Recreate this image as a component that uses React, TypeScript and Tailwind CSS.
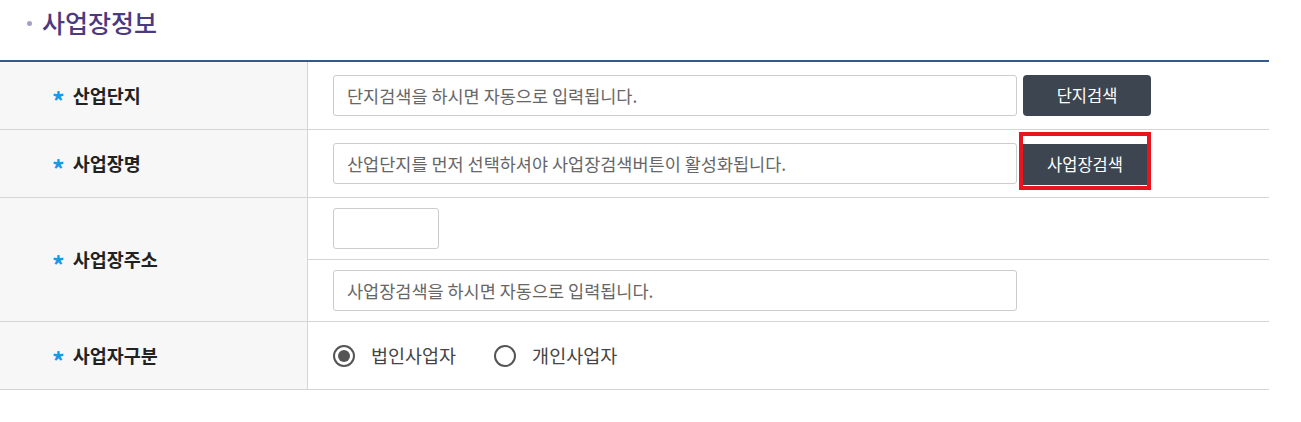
import React from "react";

const font = { fontFamily: '"Noto Sans CJK KR", "Noto Sans", sans-serif' };

function Label({ text }: { text: string }) {
  return (
    <div className="w-[308px] shrink-0 bg-[#f7f7f7] border-r border-[#d5d5d5] flex items-center pl-[52px]">
      <span className="text-[25px] font-bold leading-none text-[#1a9ae6] mt-[9px] mr-[8px]">*</span>
      <span className="text-[18.5px] font-bold text-[#222]">{text}</span>
    </div>
  );
}

function TextBox({ placeholder, w = "w-[684px]" }: { placeholder?: string; w?: string }) {
  return (
    <input
      readOnly
      placeholder={placeholder}
      className={`${w} h-[41px] border border-[#cccccc] rounded-[3px] px-[13px] text-[17.5px] text-[#333] placeholder:text-[#666] bg-white outline-none`}
      style={font}
    />
  );
}

function Radio({ checked, label }: { checked?: boolean; label: string }) {
  return (
    <label className="flex items-center gap-[16px]">
      <span className="w-[22px] h-[22px] rounded-full border-2 border-[#555] flex items-center justify-center bg-white">
        {checked && <span className="w-[12px] h-[12px] rounded-full bg-[#555]" />}
      </span>
      <span className="text-[18.5px] text-[#444]">{label}</span>
    </label>
  );
}

export default function App() {
  return (
    <div className="bg-white w-[1301px] h-[422px]" style={font}>
      <div className="flex items-center h-[60px] pl-[27px] pb-[15px]">
        <span className="w-[5px] h-[5px] rounded-full bg-[#a99cc6] mr-[10px] mt-[2px]" />
        <h2 className="text-[25px] font-medium text-[#4a3a80] leading-none">사업장정보</h2>
      </div>
      <div className="w-[1269px] border-t-2 border-[#2f5b8e]">
        <div className="flex h-[68px] border-b border-[#d5d5d5]">
          <Label text="산업단지" />
          <div className="flex items-center pl-[25px] gap-[6px]">
            <TextBox placeholder="단지검색을 하시면 자동으로 입력됩니다." />
            <button className="w-[128px] h-[41px] rounded-[4px] bg-[#3c4550] text-white text-[16.5px]">단지검색</button>
          </div>
        </div>
        <div className="flex h-[68px] border-b border-[#d5d5d5]">
          <Label text="사업장명" />
          <div className="flex items-center pl-[25px] gap-[2px]">
            <TextBox placeholder="산업단지를 먼저 선택하셔야 사업장검색버튼이 활성화됩니다." />
            <div className="w-[132px] h-[58px] -mt-[5px] border-[4px] border-[#e8141f] bg-white flex flex-col justify-end pb-[1px]">
              <button className="w-full h-[41px] bg-[#3c4550] text-white text-[16.5px]">사업장검색</button>
            </div>
          </div>
        </div>
        <div className="flex h-[124px] border-b border-[#d5d5d5]">
          <Label text="사업장주소" />
          <div className="flex-1 flex flex-col">
            <div className="h-[62px] flex items-center pl-[25px] border-b border-[#d5d5d5]">
              <TextBox w="w-[106px]" />
            </div>
            <div className="flex-1 flex items-center pl-[25px]">
              <TextBox placeholder="사업장검색을 하시면 자동으로 입력됩니다." />
            </div>
          </div>
        </div>
        <div className="flex h-[68px] border-b border-[#d5d5d5]">
          <Label text="사업자구분" />
          <div className="flex items-center pl-[25px] gap-[38px]">
            <Radio checked label="법인사업자" />
            <Radio label="개인사업자" />
          </div>
        </div>
      </div>
    </div>
  );
}
